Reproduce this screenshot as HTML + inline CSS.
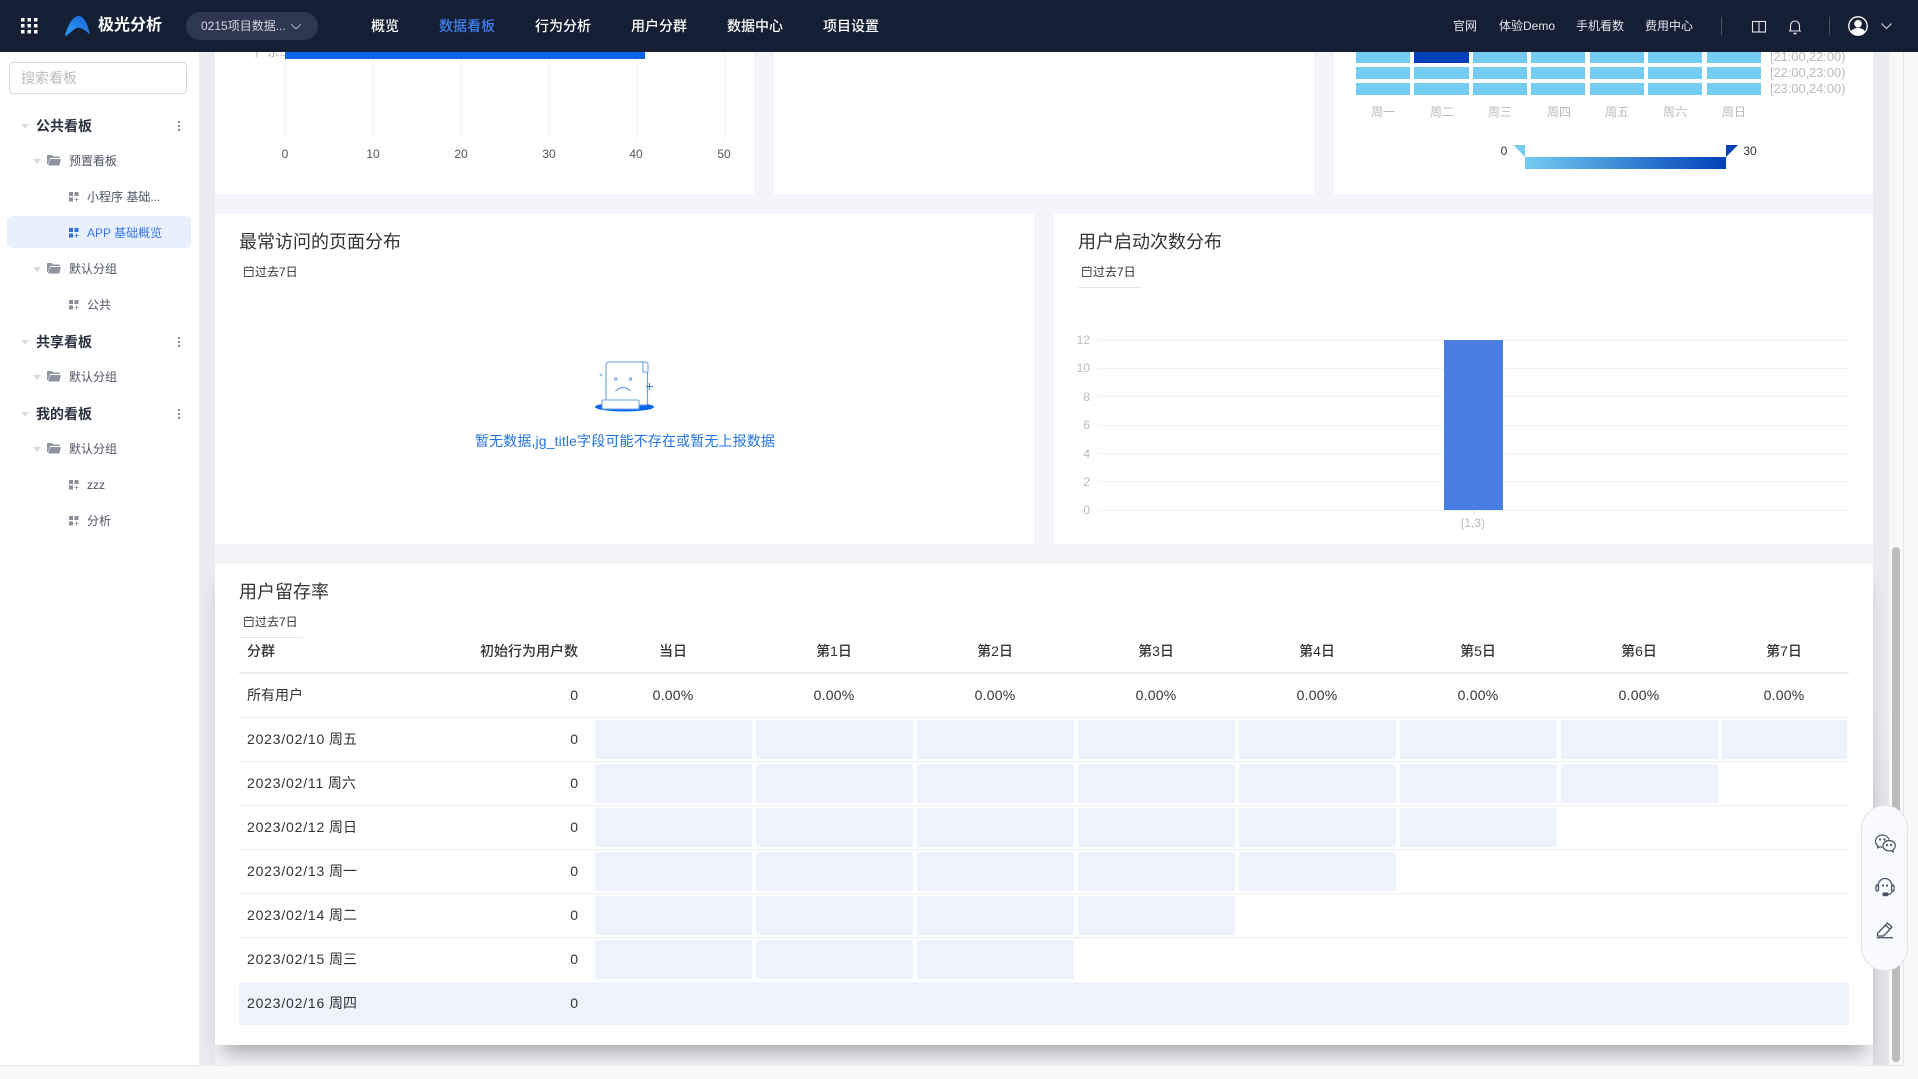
<!DOCTYPE html>
<html lang="zh-CN">
<head>
<meta charset="utf-8">
<title>极光分析</title>
<style>
*{box-sizing:border-box;margin:0;padding:0}
html,body{width:1918px;height:1079px;overflow:hidden;background:#f8f8f8;font-family:"Liberation Sans","Noto Sans CJK SC",sans-serif;color:#333}
.a{position:absolute}
.t{position:absolute;white-space:nowrap;line-height:20px;height:20px}
.c{text-align:center}
.r{text-align:right}
#top{position:absolute;left:0;top:0;width:1918px;height:52px;background:#151f34;z-index:10}
#top .n{font-size:14px;font-weight:500;color:#fff;top:16px}
#top .m{font-size:12px;color:#e4e6ea;top:16px}
#side{position:absolute;left:0;top:52px;width:199px;height:1013px;background:#fff}
.g1{font-size:14px;font-weight:700;color:#2b3140;left:36px}
.g2{font-size:12px;color:#4e5462;left:69px}
.g3{font-size:12px;color:#4e5462;left:87px}
.car{position:absolute;width:0;height:0;border-left:4px solid transparent;border-right:4px solid transparent;border-top:5px solid #d8dadf}
.dots{position:absolute;left:178px;width:2px;height:2px;border-radius:50%;background:#666;box-shadow:0 -4px 0 #666,0 4px 0 #666}
#gut{position:absolute;left:199px;top:52px;width:1690px;height:1014px;background:#e9ebef;overflow:hidden}
#mid{position:absolute;left:16px;top:0;width:1658px;height:1014px;background:#f3f4f7}
.card{position:absolute;background:#fff}
.title{font-size:18px;color:#333;line-height:24px;height:24px}
.sub{font-size:12px;color:#333}
.ax{font-size:12px;color:#bbb}
.grid{position:absolute;background:#f2f3f4;height:1px}
.vg{position:absolute;top:52px;width:1px;height:88px;background:#f1f2f4}
.cell{position:absolute;background:#edf2fd;height:39px}
.line{position:absolute;left:239px;width:1610px;height:1px;background:#eceef0}
.hd{font-size:14px;font-weight:500;color:#333;top:641px}
.tx{font-size:14px;color:#333}
.d{letter-spacing:.8px}
.pc{font-size:14px;color:#333;width:100px;letter-spacing:.2px}
.hm{position:absolute;background:#74ccf2;width:54px;height:12px}
.rl{font-size:12.8px;color:#bbb;left:1770px}
#sb{position:absolute;left:1889px;top:52px;width:15px;height:1014px;background:#f7f7f7;border-right:1px solid #e6e6e6}
#thumb{position:absolute;left:3px;top:495px;width:8px;height:515px;border-radius:4px;background:#bcbcbc}
#foot{position:absolute;left:0;top:1065px;width:1904px;height:1px;background:#e8e8e8;z-index:3}
#float{position:absolute;left:1861px;top:805px;width:47px;height:166px;border-radius:24px;background:#f8fafe;border:1px solid #dfe2e8;z-index:5}
</style>
</head>
<body>

<div id="gut">
  <div id="mid"></div>
</div>

<div id="page" class="a" style="left:0;top:0;width:1918px;height:1079px">
  <div class="a" style="left:199px;top:52px;width:1690px;height:1014px;overflow:hidden">
    <div class="a" style="left:-199px;top:-52px;width:1918px;height:1079px">

      <!-- top cards -->
      <div class="card" style="left:215px;top:40px;width:539px;height:154px"></div>
      <div class="card" style="left:774px;top:40px;width:540px;height:154px"></div>
      <div class="card" style="left:1334px;top:40px;width:539px;height:154px"></div>

      <!-- bar chart fragment -->
      <div class="vg" style="left:285px"></div>
      <div class="vg" style="left:373px"></div>
      <div class="vg" style="left:461px"></div>
      <div class="vg" style="left:549px"></div>
      <div class="vg" style="left:636px"></div>
      <div class="vg" style="left:724px"></div>
      <div class="a" style="left:285px;top:52px;width:360px;height:7px;background:#0a66e8"></div>
      <div class="a" style="left:280px;top:55px;width:5px;height:1px;background:#ccc"></div>
      <div class="t ax" style="left:255px;top:42px;color:#aaa">广东</div>
      <div class="t c" style="left:265px;width:40px;top:144px;font-size:12px;color:#555">0</div>
      <div class="t c" style="left:353px;width:40px;top:144px;font-size:12px;color:#555">10</div>
      <div class="t c" style="left:441px;width:40px;top:144px;font-size:12px;color:#555">20</div>
      <div class="t c" style="left:529px;width:40px;top:144px;font-size:12px;color:#555">30</div>
      <div class="t c" style="left:616px;width:40px;top:144px;font-size:12px;color:#555">40</div>
      <div class="t c" style="left:704px;width:40px;top:144px;font-size:12px;color:#555">50</div>

      <!-- heatmap fragment -->
      <div class="hm" style="left:1356px;top:52px;height:11px"></div>
      <div class="hm" style="left:1414px;top:52px;height:11px;background:#0040b8;width:55px"></div>
      <div class="hm" style="left:1473px;top:52px;height:11px"></div>
      <div class="hm" style="left:1531px;top:52px;height:11px"></div>
      <div class="hm" style="left:1590px;top:52px;height:11px"></div>
      <div class="hm" style="left:1648px;top:52px;height:11px"></div>
      <div class="hm" style="left:1707px;top:52px;height:11px"></div>

      <div class="hm" style="left:1356px;top:67px"></div>
      <div class="hm" style="left:1414px;top:67px;width:55px"></div>
      <div class="hm" style="left:1473px;top:67px"></div>
      <div class="hm" style="left:1531px;top:67px"></div>
      <div class="hm" style="left:1590px;top:67px"></div>
      <div class="hm" style="left:1648px;top:67px"></div>
      <div class="hm" style="left:1707px;top:67px"></div>

      <div class="hm" style="left:1356px;top:83px"></div>
      <div class="hm" style="left:1414px;top:83px;width:55px"></div>
      <div class="hm" style="left:1473px;top:83px"></div>
      <div class="hm" style="left:1531px;top:83px"></div>
      <div class="hm" style="left:1590px;top:83px"></div>
      <div class="hm" style="left:1648px;top:83px"></div>
      <div class="hm" style="left:1707px;top:83px"></div>

      <div class="t rl" style="top:47px">[21:00,22:00)</div>
      <div class="t rl" style="top:63px">[22:00,23:00)</div>
      <div class="t rl" style="top:79px">[23:00,24:00)</div>

      <div class="t c ax" style="left:1358px;width:50px;top:102px">周一</div>
      <div class="t c ax" style="left:1417px;width:50px;top:102px">周二</div>
      <div class="t c ax" style="left:1475px;width:50px;top:102px">周三</div>
      <div class="t c ax" style="left:1534px;width:50px;top:102px">周四</div>
      <div class="t c ax" style="left:1592px;width:50px;top:102px">周五</div>
      <div class="t c ax" style="left:1650px;width:50px;top:102px">周六</div>
      <div class="t c ax" style="left:1709px;width:50px;top:102px">周日</div>

      <div class="a" style="left:1525px;top:157px;width:201px;height:12px;background:linear-gradient(90deg,#74ccf2,#0040b8)"></div>
      <svg class="a" style="left:1510px;top:143px" width="232" height="16" viewBox="0 0 232 16">
        <polygon points="3.5,2 15,2 15,14" fill="#74ccf2"/>
        <polygon points="216,14 216,2 228,2" fill="#0040b8"/>
      </svg>
      <div class="t c" style="left:1494px;width:20px;top:141px;font-size:12px;color:#333">0</div>
      <div class="t c" style="left:1740px;width:20px;top:141px;font-size:12px;color:#333">30</div>

      <!-- page distribution card -->
      <div class="card" style="left:215px;top:214px;width:819px;height:330px"></div>
      <div class="t title" style="left:239px;top:230px">最常访问的页面分布</div>
      <svg class="a" style="left:244px;top:266px" width="10" height="11" viewBox="0 0 10 11" fill="none" stroke="#555" stroke-width="1"><rect x=".5" y="1.5" width="8.5" height="9"/><path d="M.5 4.500h8.500M3 .3v2M6.500 .3v2"/></svg>
      <div class="t sub" style="left:255px;top:262px">过去7日</div>

      <svg class="a" style="left:590px;top:358px" width="70" height="58" viewBox="0 0 70 58" fill="none">
        <ellipse cx="34.500" cy="49" rx="29.500" ry="4.500" fill="#0a66e8"/>
        <path d="M16 44V7q0-3 3-3h36q2.500 0 2.500 3v38q0 2-2 2H16z" fill="#fff" stroke="#6a9fe2" stroke-width="1.100"/>
        <path d="M53 6q0-2 2-2t3 2v8h-5z" fill="#fff" stroke="#6a9fe2" stroke-width="1"/>
        <rect x="12" y="42" width="37" height="9" rx="1" fill="#fff" stroke="#6a9fe2" stroke-width="1.100"/>
        <circle cx="25.500" cy="21" r="1.200" stroke="#6a9fe2"/>
        <circle cx="40.500" cy="21" r="1.200" stroke="#6a9fe2"/>
        <path d="M25.500 33q7.500-7 15 0" stroke="#6a9fe2" stroke-width="1.100"/>
        <path d="M59.500 25v7M56 28.500h7" stroke="#3f82dc" stroke-width="1"/>
        <path d="M11 15.500v3M9.500 17h3" stroke="#6a9fe2" stroke-width=".8"/>
      </svg>
      <div class="t c" style="left:425px;width:400px;top:431px;font-size:14px;color:#2374e1;letter-spacing:.14px">暂无数据,jg_title字段可能不存在或暂无上报数据</div>

      <!-- launch distribution card -->
      <div class="card" style="left:1054px;top:214px;width:819px;height:330px"></div>
      <div class="t title" style="left:1078px;top:230px">用户启动次数分布</div>
      <svg class="a" style="left:1082px;top:266px" width="10" height="11" viewBox="0 0 10 11" fill="none" stroke="#555" stroke-width="1"><rect x=".5" y="1.500" width="8.500" height="9"/><path d="M.5 4.500h8.500M3 .3v2M6.500 .3v2"/></svg>
      <div class="t sub" style="left:1093px;top:262px">过去7日</div>
      <div class="a" style="left:1078px;top:287px;width:64px;height:1px;background:#e6e6e6"></div>

      <div class="grid" style="left:1098px;top:340px;width:751px"></div>
      <div class="grid" style="left:1098px;top:368px;width:751px"></div>
      <div class="grid" style="left:1098px;top:396px;width:751px"></div>
      <div class="grid" style="left:1098px;top:425px;width:751px"></div>
      <div class="grid" style="left:1098px;top:453px;width:751px"></div>
      <div class="grid" style="left:1098px;top:481px;width:751px"></div>
      <div class="grid" style="left:1098px;top:510px;width:751px"></div>
      <div class="t r ax" style="left:1060px;width:30px;top:330px">12</div>
      <div class="t r ax" style="left:1060px;width:30px;top:358px">10</div>
      <div class="t r ax" style="left:1060px;width:30px;top:387px">8</div>
      <div class="t r ax" style="left:1060px;width:30px;top:415px">6</div>
      <div class="t r ax" style="left:1060px;width:30px;top:444px">4</div>
      <div class="t r ax" style="left:1060px;width:30px;top:472px">2</div>
      <div class="t r ax" style="left:1060px;width:30px;top:500px">0</div>
      <div class="a" style="left:1444px;top:340px;width:59px;height:170px;background:#4a7de2"></div>
      <div class="a" style="left:1473px;top:510px;width:1px;height:5px;background:#e2e2e2"></div>
      <div class="t c ax" style="left:1443px;width:60px;top:513px">[1,3)</div>

      <!-- retention card -->
      <div class="card" style="left:215px;top:564px;width:1658px;height:481px;box-shadow:0 16px 18px -8px rgba(0,0,0,.3)"></div>
      <div class="t title" style="left:239px;top:580px">用户留存率</div>
      <svg class="a" style="left:244px;top:616px" width="10" height="11" viewBox="0 0 10 11" fill="none" stroke="#555" stroke-width="1"><rect x=".5" y="1.500" width="8.500" height="9"/><path d="M.5 4.500h8.500M3 .3v2M6.500 .3v2"/></svg>
      <div class="t sub" style="left:255px;top:612px">过去7日</div>
      <div class="a" style="left:239px;top:637px;width:64px;height:1px;background:#e6e6e6"></div>

      <div class="t hd" style="left:247px">分群</div>
      <div class="t hd r" style="left:440px;width:138px">初始行为用户数</div>
      <div class="t hd c" style="left:623px;width:100px">当日</div>
      <div class="t hd c" style="left:784px;width:100px">第1日</div>
      <div class="t hd c" style="left:945px;width:100px">第2日</div>
      <div class="t hd c" style="left:1106px;width:100px">第3日</div>
      <div class="t hd c" style="left:1267px;width:100px">第4日</div>
      <div class="t hd c" style="left:1428px;width:100px">第5日</div>
      <div class="t hd c" style="left:1589px;width:100px">第6日</div>
      <div class="t hd c" style="left:1734px;width:100px">第7日</div>
      <div class="a" style="left:239px;top:672px;width:1610px;height:2px;background:#eceef0"></div>

      <div class="line" style="top:717px"></div>
      <div class="line" style="top:761px"></div>
      <div class="line" style="top:805px"></div>
      <div class="line" style="top:849px"></div>
      <div class="line" style="top:893px"></div>
      <div class="line" style="top:937px"></div>

      <div class="t tx" style="left:247px;top:685px">所有用户</div>
      <div class="t tx r" style="left:500px;width:78px;top:685px">0</div>
      <div class="t pc c" style="left:623px;top:685px">0.00%</div>
      <div class="t pc c" style="left:784px;top:685px">0.00%</div>
      <div class="t pc c" style="left:945px;top:685px">0.00%</div>
      <div class="t pc c" style="left:1106px;top:685px">0.00%</div>
      <div class="t pc c" style="left:1267px;top:685px">0.00%</div>
      <div class="t pc c" style="left:1428px;top:685px">0.00%</div>
      <div class="t pc c" style="left:1589px;top:685px">0.00%</div>
      <div class="t pc c" style="left:1734px;top:685px">0.00%</div>

      <div class="t tx" style="left:247px;top:729px"><span class="d">2023/02/10</span> 周五</div>
      <div class="t tx r" style="left:500px;width:78px;top:729px">0</div>
      <div class="t tx" style="left:247px;top:773px"><span class="d">2023/02/11</span> 周六</div>
      <div class="t tx r" style="left:500px;width:78px;top:773px">0</div>
      <div class="t tx" style="left:247px;top:817px"><span class="d">2023/02/12</span> 周日</div>
      <div class="t tx r" style="left:500px;width:78px;top:817px">0</div>
      <div class="t tx" style="left:247px;top:861px"><span class="d">2023/02/13</span> 周一</div>
      <div class="t tx r" style="left:500px;width:78px;top:861px">0</div>
      <div class="t tx" style="left:247px;top:905px"><span class="d">2023/02/14</span> 周二</div>
      <div class="t tx r" style="left:500px;width:78px;top:905px">0</div>
      <div class="t tx" style="left:247px;top:949px"><span class="d">2023/02/15</span> 周三</div>
      <div class="t tx r" style="left:500px;width:78px;top:949px">0</div>

      <div class="cell" style="left:595px;top:720px;width:157px"></div>
      <div class="cell" style="left:756px;top:720px;width:157px"></div>
      <div class="cell" style="left:917px;top:720px;width:157px"></div>
      <div class="cell" style="left:1078px;top:720px;width:157px"></div>
      <div class="cell" style="left:1239px;top:720px;width:157px"></div>
      <div class="cell" style="left:1400px;top:720px;width:157px"></div>
      <div class="cell" style="left:1561px;top:720px;width:157px"></div>
      <div class="cell" style="left:1722px;top:720px;width:125px"></div>

      <div class="cell" style="left:595px;top:764px;width:157px"></div>
      <div class="cell" style="left:756px;top:764px;width:157px"></div>
      <div class="cell" style="left:917px;top:764px;width:157px"></div>
      <div class="cell" style="left:1078px;top:764px;width:157px"></div>
      <div class="cell" style="left:1239px;top:764px;width:157px"></div>
      <div class="cell" style="left:1400px;top:764px;width:157px"></div>
      <div class="cell" style="left:1561px;top:764px;width:157px"></div>

      <div class="cell" style="left:595px;top:808px;width:157px"></div>
      <div class="cell" style="left:756px;top:808px;width:157px"></div>
      <div class="cell" style="left:917px;top:808px;width:157px"></div>
      <div class="cell" style="left:1078px;top:808px;width:157px"></div>
      <div class="cell" style="left:1239px;top:808px;width:157px"></div>
      <div class="cell" style="left:1400px;top:808px;width:157px"></div>

      <div class="cell" style="left:595px;top:852px;width:157px"></div>
      <div class="cell" style="left:756px;top:852px;width:157px"></div>
      <div class="cell" style="left:917px;top:852px;width:157px"></div>
      <div class="cell" style="left:1078px;top:852px;width:157px"></div>
      <div class="cell" style="left:1239px;top:852px;width:157px"></div>

      <div class="cell" style="left:595px;top:896px;width:157px"></div>
      <div class="cell" style="left:756px;top:896px;width:157px"></div>
      <div class="cell" style="left:917px;top:896px;width:157px"></div>
      <div class="cell" style="left:1078px;top:896px;width:157px"></div>

      <div class="cell" style="left:595px;top:940px;width:157px"></div>
      <div class="cell" style="left:756px;top:940px;width:157px"></div>
      <div class="cell" style="left:917px;top:940px;width:157px"></div>

      <div class="a" style="left:239px;top:982px;width:1610px;height:43px;background:#edf2fd"></div>
      <div class="t tx" style="left:247px;top:993px"><span class="d">2023/02/16</span> 周四</div>
      <div class="t tx r" style="left:500px;width:78px;top:993px">0</div>

      <!-- right gutter shading near widget -->
      <div class="a" style="left:1873px;top:700px;width:16px;height:366px;background:linear-gradient(90deg,rgba(0,0,0,.06),rgba(0,0,0,.02));-webkit-mask-image:linear-gradient(180deg,transparent,#000 30%);mask-image:linear-gradient(180deg,transparent,#000 30%)"></div>
    </div>
  </div>
</div>

<!-- sidebar -->
<div id="side">
  <div class="a" style="left:9px;top:10px;width:178px;height:32px;border:1px solid #d9dbdf;border-radius:4px"></div>
  <div class="t" style="left:21px;top:16px;font-size:14px;color:#bdbdbd">搜索看板</div>

  <div class="car" style="left:21px;top:72px"></div>
  <div class="t g1" style="top:64px">公共看板</div>
  <div class="dots" style="top:73px"></div>

  <div class="car" style="left:33px;top:107px"></div>
  <svg class="a" style="left:47px;top:103px" width="14" height="11" viewBox="0 0 14 11"><path d="M0 1q0-1 1-1h4l1 1.500h6q1 0 1 1V3H3L1 9H0z" fill="#9094a0"/><path d="M3.200 4H14l-1.800 6.500H1z" fill="#9094a0"/></svg>
  <div class="t g2" style="top:99px">预置看板</div>

  <svg class="a" style="left:69px;top:140px" width="10" height="10" viewBox="0 0 10 10" fill="#8b8f99"><rect x="0" y="0" width="4" height="4"/><rect x="5.500" y="0" width="4" height="4"/><rect x="0" y="5.500" width="4" height="4"/><path d="M7.200 5.500h.8v1.700h1.700v.8H8v1.700h-.8V8H5.500v-.8h1.700z"/></svg>
  <div class="t g3" style="top:135px">小程序 基础...</div>

  <div class="a" style="left:7px;top:164px;width:184px;height:32px;background:#e8f0fd;border-radius:6px"></div>
  <svg class="a" style="left:69px;top:176px" width="10" height="10" viewBox="0 0 10 10" fill="#2f6fe0"><rect x="0" y="0" width="4" height="4"/><rect x="5.500" y="0" width="4" height="4"/><rect x="0" y="5.500" width="4" height="4"/><path d="M7.200 5.500h.8v1.700h1.700v.8H8v1.700h-.8V8H5.500v-.8h1.700z"/></svg>
  <div class="t g3" style="top:171px;color:#3c78e8">APP 基础概览</div>

  <div class="car" style="left:33px;top:215px"></div>
  <svg class="a" style="left:47px;top:211px" width="14" height="11" viewBox="0 0 14 11"><path d="M0 1q0-1 1-1h4l1 1.500h6q1 0 1 1V3H3L1 9H0z" fill="#9094a0"/><path d="M3.200 4H14l-1.800 6.500H1z" fill="#9094a0"/></svg>
  <div class="t g2" style="top:207px">默认分组</div>

  <svg class="a" style="left:69px;top:248px" width="10" height="10" viewBox="0 0 10 10" fill="#8b8f99"><rect x="0" y="0" width="4" height="4"/><rect x="5.500" y="0" width="4" height="4"/><rect x="0" y="5.500" width="4" height="4"/><path d="M7.200 5.500h.8v1.700h1.700v.8H8v1.700h-.8V8H5.500v-.8h1.700z"/></svg>
  <div class="t g3" style="top:243px">公共</div>

  <div class="car" style="left:21px;top:288px"></div>
  <div class="t g1" style="top:280px">共享看板</div>
  <div class="dots" style="top:289px"></div>

  <div class="car" style="left:33px;top:323px"></div>
  <svg class="a" style="left:47px;top:319px" width="14" height="11" viewBox="0 0 14 11"><path d="M0 1q0-1 1-1h4l1 1.500h6q1 0 1 1V3H3L1 9H0z" fill="#9094a0"/><path d="M3.200 4H14l-1.800 6.500H1z" fill="#9094a0"/></svg>
  <div class="t g2" style="top:315px">默认分组</div>

  <div class="car" style="left:21px;top:360px"></div>
  <div class="t g1" style="top:352px">我的看板</div>
  <div class="dots" style="top:361px"></div>

  <div class="car" style="left:33px;top:395px"></div>
  <svg class="a" style="left:47px;top:391px" width="14" height="11" viewBox="0 0 14 11"><path d="M0 1q0-1 1-1h4l1 1.500h6q1 0 1 1V3H3L1 9H0z" fill="#9094a0"/><path d="M3.200 4H14l-1.800 6.500H1z" fill="#9094a0"/></svg>
  <div class="t g2" style="top:387px">默认分组</div>

  <svg class="a" style="left:69px;top:428px" width="10" height="10" viewBox="0 0 10 10" fill="#8b8f99"><rect x="0" y="0" width="4" height="4"/><rect x="5.500" y="0" width="4" height="4"/><rect x="0" y="5.500" width="4" height="4"/><path d="M7.200 5.500h.8v1.700h1.700v.8H8v1.700h-.8V8H5.500v-.8h1.700z"/></svg>
  <div class="t g3" style="top:423px">zzz</div>

  <svg class="a" style="left:69px;top:464px" width="10" height="10" viewBox="0 0 10 10" fill="#8b8f99"><rect x="0" y="0" width="4" height="4"/><rect x="5.500" y="0" width="4" height="4"/><rect x="0" y="5.500" width="4" height="4"/><path d="M7.200 5.500h.8v1.700h1.700v.8H8v1.700h-.8V8H5.500v-.8h1.700z"/></svg>
  <div class="t g3" style="top:459px">分析</div>
</div>

<!-- scrollbar and bottom -->
<div id="sb"><div id="thumb"></div></div>
<div id="foot"></div>

<!-- float widget -->
<div id="float">
  <svg class="a" style="left:12px;top:28px" width="23" height="20" viewBox="0 0 23 20" fill="none" stroke="#4a5264" stroke-width="1.200" stroke-linejoin="round">
    <path d="M15 5.500C14 2.800 11.500 1 8.500 1 4.600 1 1.500 3.800 1.500 7.200c0 2 1 3.700 2.700 4.800L3.500 14l2.600-1.200c.8.200 1.500.3 2.300.3"/>
    <path d="M15 6.500c-3.300 0-6 2.300-6 5.200s2.700 5.200 6 5.200c.7 0 1.300-.1 2-.3l2.400 1.400-.5-2.300c1.500-1 2.400-2.400 2.400-4 0-2.900-2.700-5.200-6.300-5.200z" fill="#f8fafe"/>
    <circle cx="6" cy="5.500" r=".5" fill="#4a5264"/><circle cx="10.500" cy="5.500" r=".5" fill="#4a5264"/>
    <circle cx="13" cy="11" r=".5" fill="#4a5264"/><circle cx="17" cy="11" r=".5" fill="#4a5264"/>
  </svg>
  <svg class="a" style="left:13px;top:71px" width="20" height="20" viewBox="0 0 20 20" fill="none" stroke="#4a5264" stroke-width="1.300">
    <path d="M3 9.500C3 5 6 1.500 10 1.500s7 3.500 7 8"/>
    <rect x="1" y="8" width="2.500" height="6" rx="1.200"/>
    <rect x="16.500" y="8" width="2.500" height="6" rx="1.200"/>
    <path d="M17.500 14c-.5 2-2.500 3.500-5 3.500"/>
    <rect x="8" y="16" width="5" height="2.600" rx="1.300" fill="#4a5264"/>
    <circle cx="8" cy="8.500" r=".5" fill="#4a5264"/><circle cx="12" cy="8.500" r=".5" fill="#4a5264"/>
  </svg>
  <svg class="a" style="left:14px;top:115px" width="18" height="18" viewBox="0 0 18 18" fill="none" stroke="#4a5264" stroke-width="1.300" stroke-linejoin="round">
    <path d="M1.500 12.500 11.500 2l4.500 4-8.500 9H1.500z"/>
    <path d="M9.500 4l4.500 4.200"/>
    <path d="M1 16.700h16"/>
  </svg>
</div>

<!-- header -->
<div id="top">
  <svg class="a" style="left:21px;top:18px" width="17" height="16" viewBox="0 0 17 16" fill="#fff">
    <rect x="0" y="0" width="3.500" height="3.500"/><rect x="6.500" y="0" width="3.500" height="3.500"/><rect x="13" y="0" width="3.500" height="3.500"/>
    <rect x="0" y="6" width="3.500" height="3.500"/><rect x="6.500" y="6" width="3.500" height="3.500"/><rect x="13" y="6" width="3.500" height="3.500"/>
    <rect x="0" y="12" width="3.500" height="3.500"/><rect x="6.500" y="12" width="3.500" height="3.500"/><rect x="13" y="12" width="3.500" height="3.500"/>
  </svg>
  <svg class="a" style="left:65px;top:16px" width="26" height="21" viewBox="0 0 26 21">
    <defs><linearGradient id="lg" x1="0" y1="1" x2="1" y2="0"><stop offset="0" stop-color="#29a3f2"/><stop offset="1" stop-color="#1b62dd"/></linearGradient></defs>
    <path d="M0 20.500C1.500 12 7 0 14 0c5 0 9 9 11 18.500-4-3.500-7-6-11.500-7C9 12 6 17 0 20.500z" fill="url(#lg)"/>
  </svg>
  <div class="t" style="left:98px;top:16px;font-size:16px;font-weight:700;color:#fff">极光分析</div>
  <div class="a" style="left:186px;top:12px;width:132px;height:28px;border-radius:14px;background:#2d3750"></div>
  <div class="t" style="left:201px;top:16px;font-size:12px;color:#d3d6dc">0215项目数据...</div>
  <svg class="a" style="left:290px;top:23px" width="12" height="7" viewBox="0 0 12 7" fill="none" stroke="#aab0bc" stroke-width="1"><path d="M1 1l5 5 5-5"/></svg>

  <div class="t n" style="left:371px">概览</div>
  <div class="t n" style="left:439px;color:#3f7ff0">数据看板</div>
  <div class="t n" style="left:535px">行为分析</div>
  <div class="t n" style="left:631px">用户分群</div>
  <div class="t n" style="left:727px">数据中心</div>
  <div class="t n" style="left:823px">项目设置</div>

  <div class="t m" style="left:1453px">官网</div>
  <div class="t m" style="left:1499px">体验Demo</div>
  <div class="t m" style="left:1576px">手机看数</div>
  <div class="t m" style="left:1645px">费用中心</div>

  <div class="a" style="left:1721px;top:17px;width:1px;height:18px;background:#4a5264"></div>
  <svg class="a" style="left:1751px;top:20px" width="16" height="14" viewBox="0 0 16 14" fill="none" stroke="#e4e6ea" stroke-width="1.100"><rect x="1.500" y="1.500" width="13" height="10.500"/><path d="M8 1.500V12"/></svg>
  <svg class="a" style="left:1788px;top:19px" width="14" height="16" viewBox="0 0 14 16" fill="none" stroke="#e4e6ea" stroke-width="1.100"><path d="M2.500 11.500V6.500a4.500 4.500 0 0 1 9 0v5M1 12h12"/><path d="M5.500 14.500h3" stroke-width="1.600"/></svg>
  <div class="a" style="left:1829px;top:17px;width:1px;height:18px;background:#4a5264"></div>
  <svg class="a" style="left:1848px;top:16px" width="20" height="20" viewBox="0 0 20 20">
    <circle cx="10" cy="10" r="9.200" fill="none" stroke="#fff" stroke-width="1.300"/>
    <circle cx="10" cy="7.800" r="3.800" fill="#fff"/>
    <path d="M3 15.500c1.500-2.500 4-3.500 7-3.500s5.500 1 7 3.500c-1.700 2.200-4.200 3.700-7 3.700s-5.300-1.500-7-3.700z" fill="#fff"/>
  </svg>
  <svg class="a" style="left:1880px;top:22px" width="13" height="8" viewBox="0 0 13 8" fill="none" stroke="#d5d8de" stroke-width="1.100"><path d="M1.500 1.500l5 5 5-5"/></svg>
</div>

</body>
</html>
